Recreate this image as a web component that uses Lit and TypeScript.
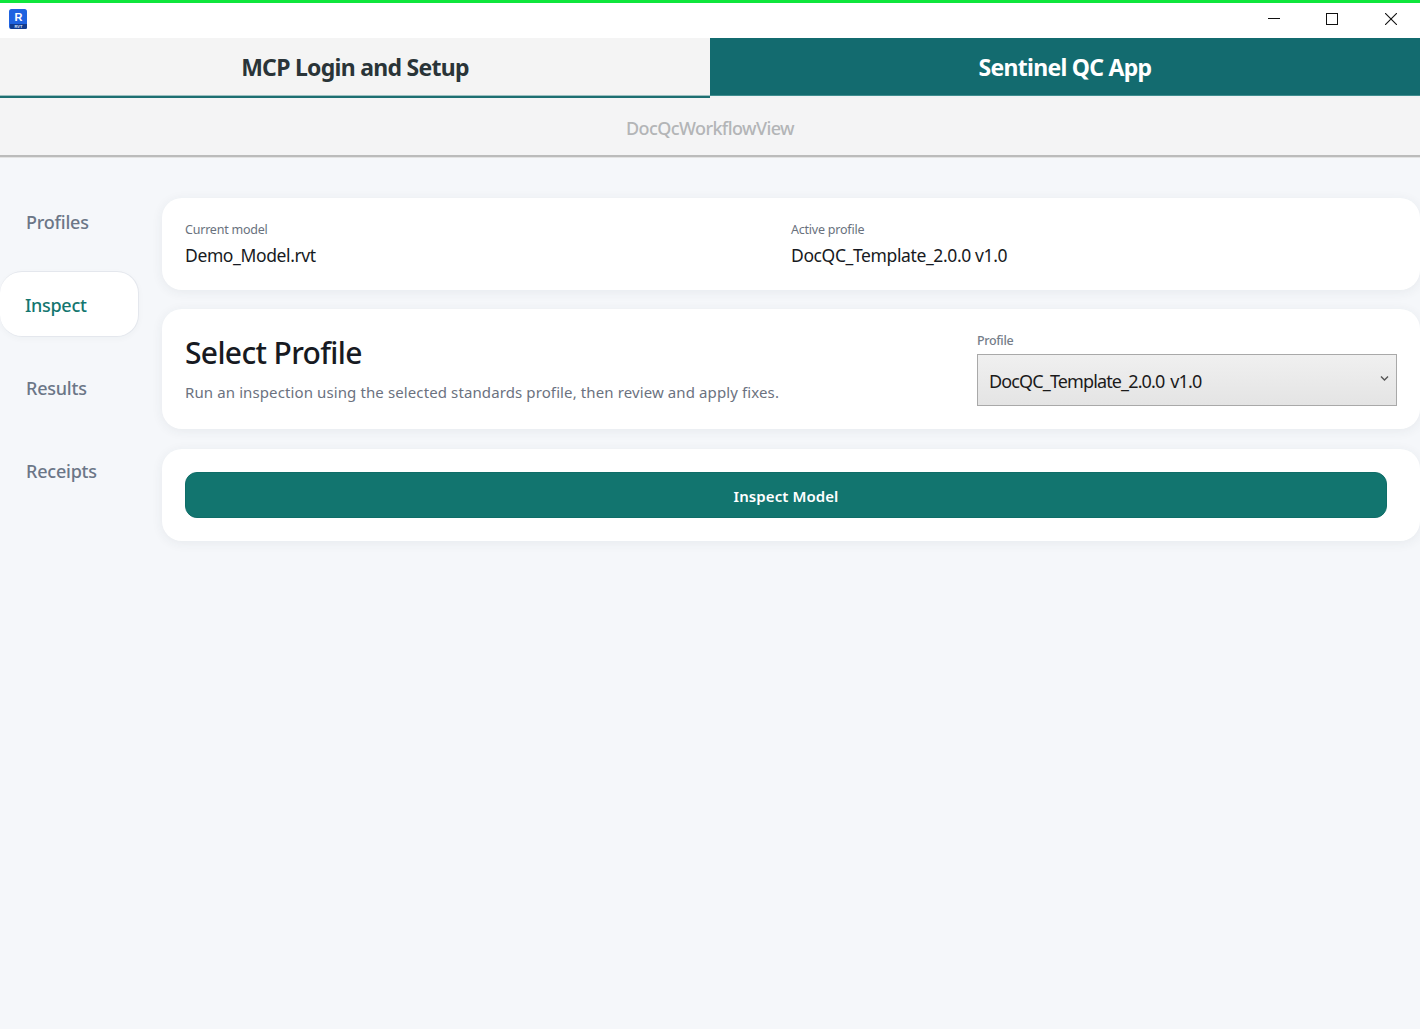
import { LitElement, html, css } from "lit";
import { customElement } from "lit/decorators.js";

@customElement("app-root")
export class AppRoot extends LitElement {
  static styles = css`
    :host {
      display: flex;
      flex-direction: column;
      min-height: 1029px;
      width: 1420px;
      overflow: hidden;
      background: #f5f7fa;
      font-family: "Noto Sans", "Open Sans", sans-serif;
      color: #171a22;
    }
    .accent { height: 3px; background: #0ee63c; }
    .titlebar {
      height: 35px;
      background: #fff;
      display: flex;
      align-items: center;
      justify-content: space-between;
    }
    .app-icon { margin: -2px 0 0 9px; display: block; }
    .winctl { display: flex; align-items: center; gap: 46px; padding-right: 23px; margin-top: -3px; }
    .winctl svg { display: block; }
    .winctl .close { margin-left: 1px; }
    .tabs { display: grid; grid-template-columns: 1fr 1fr; height: 60px; }
    .tab {
      display: flex;
      align-items: center;
      justify-content: center;
      box-sizing: border-box;
      font-size: 23px;
      font-weight: 700;
      letter-spacing: -0.72px;
    }
    .tab.off { background: #f4f4f4; color: #2a3438; border-bottom: 2px solid #1d6f72; box-shadow: inset 0 -1px 0 #9dc0c0; }
    .tab.on { background: #136b6f; color: #fff; border-bottom: 2px solid #f1f3f4; box-shadow: inset 0 -1px 0 #3f8d8f; }
    .subhead {
      height: 59px;
      box-sizing: border-box;
      background: #f4f4f5;
      border-bottom: 2px solid #bbbbbb;
      box-shadow: 0 1px 0 #e2e2e2;
      display: flex;
      align-items: center;
      justify-content: center;
      color: #b3b5b7;
      font-size: 18px;
      font-weight: 500;
      letter-spacing: -0.6px;
      padding-top: 2px;
    }
    .body { display: grid; grid-template-columns: 162px 1fr; flex: 1; }
    .nav { padding-top: 31px; display: flex; flex-direction: column; gap: 17px; }
    .nav-item {
      height: 66px;
      width: 139px;
      box-sizing: border-box;
      padding: 2px 0 0 26px;
      display: flex;
      align-items: center;
      font-size: 18px;
      font-weight: 500;
      letter-spacing: -0.22px;
      color: #6b7687;
      border-radius: 22px;
    }
    .nav-item.active {
      background: #fff;
      color: #13766f;
      padding-left: 25px;
      letter-spacing: -0.3px;
      border: 1px solid #e4e7ed;
      border-left: 0;
      box-shadow: 0 2px 6px rgba(40, 50, 70, 0.03);
    }
    .main { padding-top: 41px; display: flex; flex-direction: column; gap: 19px; }
    .main > .card:nth-child(3) { margin-top: 1px; }
    .card {
      background: #fff;
      border-radius: 20px;
      padding: 23px;
      box-sizing: border-box;
      box-shadow: 0 2px 12px rgba(40, 50, 70, 0.07);
    }
    .info { display: grid; grid-template-columns: 1fr 1fr; height: 92px; padding-top: 23px; }
    .small { font-size: 12.5px; letter-spacing: -0.22px; color: #69717d; line-height: 18px; }
    .value { font-size: 17.5px; letter-spacing: -0.38px; line-height: 24px; margin-top: 4px; color: #171a22; }
    .select-card { height: 120px; display: flex; justify-content: space-between; padding-top: 23px; }
    h1 {
      margin: 0;
      font-size: 30px;
      font-weight: 500;
      line-height: 42px;
      letter-spacing: -0.65px;
      color: #171a22;
    }
    .desc { margin: 8px 0 0; font-size: 15px; line-height: 20px; letter-spacing: 0.11px; color: #6b7280; }
    .field { width: 420px; }
    .field label { display: block; font-size: 12.5px; font-weight: 500; letter-spacing: -0.35px; color: #747d89; line-height: 18px; }
    .select-wrap { position: relative; margin-top: 4px; }
    select {
      appearance: none;
      -webkit-appearance: none;
      width: 100%;
      height: 52px;
      box-sizing: border-box;
      border: 1px solid #a9a9a9;
      border-radius: 0;
      padding: 2px 0 0 11px;
      font: inherit;
      font-size: 18px;
      letter-spacing: -0.87px;
      word-spacing: 2px;
      color: #1b1b1b;
      background: linear-gradient(#f0f0f0, #e4e4e4);
    }
    .chev { position: absolute; right: 8px; top: 21px; display: block; }
    .action-card { height: 92px; padding-right: 33px; }
    button {
      display: block;
      width: 100%;
      height: 46px;
      border: 1px solid #0f6d68;
      border-radius: 12px;
      background: #12756f;
      color: #fff;
      font: inherit;
      font-size: 15px;
      font-weight: 600;
      letter-spacing: 0.08px;
      padding: 1px 0 0;
    }
  `;

  render() {
    return html`
      <div class="accent"></div>
      <div class="titlebar">
        <svg class="app-icon" width="19" height="21" viewBox="0 0 19 21">
          <rect x="0" y="0" width="18" height="20" rx="2.5" fill="#1f63e0"></rect>
          <path d="M1 15h17v3.5a1.5 1.5 0 0 1-1.5 1.5H2.5A1.5 1.5 0 0 1 1 18.5z" fill="#123c8f"></path>
          <text x="9.5" y="12" text-anchor="middle" font-family="Liberation Sans" font-weight="700" font-size="11" fill="#fff">R</text>
          <text x="9.5" y="19" text-anchor="middle" font-family="Liberation Sans" font-weight="700" font-size="4" fill="#dfe8ff">RVT</text>
        </svg>
        <div class="winctl">
          <svg width="12" height="12" viewBox="0 0 12 12"><path d="M0 5.5h12" stroke="#111" stroke-width="1"></path></svg>
          <svg width="12" height="12" viewBox="0 0 12 12"><rect x="0.5" y="0.5" width="11" height="11" fill="none" stroke="#111" stroke-width="1"></rect></svg>
          <svg class="close" width="12" height="12" viewBox="0 0 12 12"><path d="M0 0l12 12M12 0L0 12" stroke="#111" stroke-width="1.1"></path></svg>
        </div>
      </div>
      <div class="tabs">
        <div class="tab off">MCP Login and Setup</div>
        <div class="tab on">Sentinel QC App</div>
      </div>
      <div class="subhead">DocQcWorkflowView</div>
      <div class="body">
        <nav class="nav">
          <div class="nav-item">Profiles</div>
          <div class="nav-item active">Inspect</div>
          <div class="nav-item">Results</div>
          <div class="nav-item">Receipts</div>
        </nav>
        <main class="main">
          <section class="card info">
            <div><div class="small">Current model</div><div class="value">Demo_Model.rvt</div></div>
            <div><div class="small">Active profile</div><div class="value">DocQC_Template_2.0.0 v1.0</div></div>
          </section>
          <section class="card select-card">
            <div>
              <h1>Select Profile</h1>
              <p class="desc">Run an inspection using the selected standards profile, then review and apply fixes.</p>
            </div>
            <div class="field">
              <label>Profile</label>
              <div class="select-wrap">
                <select><option>DocQC_Template_2.0.0 v1.0</option></select>
                <svg class="chev" width="9" height="7" viewBox="0 0 9 7"><path d="M1 1.5l3.5 3.5L8 1.5" fill="none" stroke="#555" stroke-width="1.4"></path></svg>
              </div>
            </div>
          </section>
          <section class="card action-card"><button>Inspect Model</button></section>
        </main>
      </div>
    `;
  }
}
